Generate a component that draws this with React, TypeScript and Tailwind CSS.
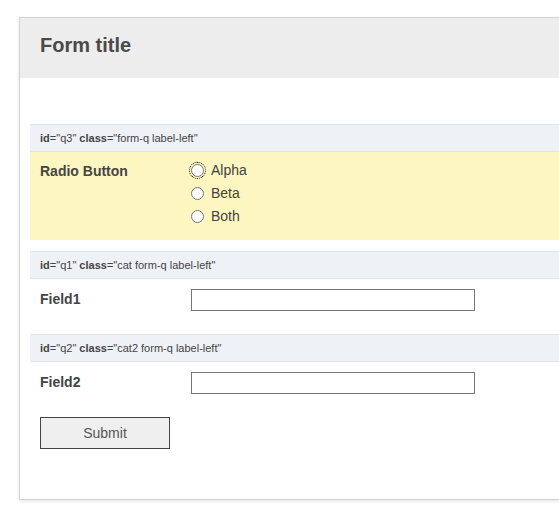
import React from "react";

const font = { fontFamily: '"Liberation Sans", Arial, sans-serif' };

function MetaBar({ id, cls }: { id: string; cls: string }) {
  return (
    <div className="h-[28px] border-y border-[#dde6ee] bg-[#eef2f6] pl-[10px] text-[11px] leading-[26px] text-[#444]">
      <b>id</b>="{id}" <b>class</b>="{cls}"
    </div>
  );
}

function Radio({ label, focused }: { label: string; focused?: boolean }) {
  return (
    <label className="flex h-[23px] items-center gap-[7px] text-[14px] text-[#444]">
      <span
        className={
          "block h-[13px] w-[13px] rounded-full border border-[#767676] bg-white" +
          (focused ? " outline-1 outline-offset-[1px] outline-dotted outline-black" : "")
        }
      />
      {label}
    </label>
  );
}

function TextRow({ label }: { label: string }) {
  return (
    <div className="flex h-[55px] items-start pl-[10px] pt-[10px]">
      <div className="w-[151px] text-[14px] leading-[20px] font-bold text-[#444]">{label}</div>
      <input
        type="text"
        className="h-[22px] w-[284px] border border-[#767676] bg-white px-1 text-[14px] outline-none"
      />
    </div>
  );
}

export default function App() {
  return (
    <div className="h-[506px] w-[559px] overflow-hidden bg-white" style={font}>
      <div className="ml-[19px] mt-[17px] w-[620px] border border-[#d3d3d3] bg-white pb-[50px] shadow-[0_1px_3px_rgba(0,0,0,0.12)]">
        <div className="flex h-[60px] items-center bg-[#ededed] pb-[6px] pl-[20px]">
          <h1 className="text-[20px] font-bold text-[#4a4a4a]">Form title</h1>
        </div>

        <div className="mt-[46px] ml-[10px]">
          <MetaBar id="q3" cls="form-q label-left" />
          <div className="flex h-[88px] items-start bg-[#fdf6c0] pl-[10px] pt-[7px]">
            <div className="w-[151px] pt-[2px] text-[14px] font-bold text-[#444]">Radio Button</div>
            <div className="flex flex-col">
              <Radio label="Alpha" focused />
              <Radio label="Beta" />
              <Radio label="Both" />
            </div>
          </div>

          <div className="mt-[11px]">
            <MetaBar id="q1" cls="cat form-q label-left" />
            <TextRow label="Field1" />
          </div>

          <MetaBar id="q2" cls="cat2 form-q label-left" />
          <TextRow label="Field2" />

          <div className="pl-[10px]">
            <button className="h-[32px] w-[130px] border border-[#444] bg-[#efefef] text-[14px] text-[#555]">
              Submit
            </button>
          </div>
        </div>
      </div>
    </div>
  );
}
